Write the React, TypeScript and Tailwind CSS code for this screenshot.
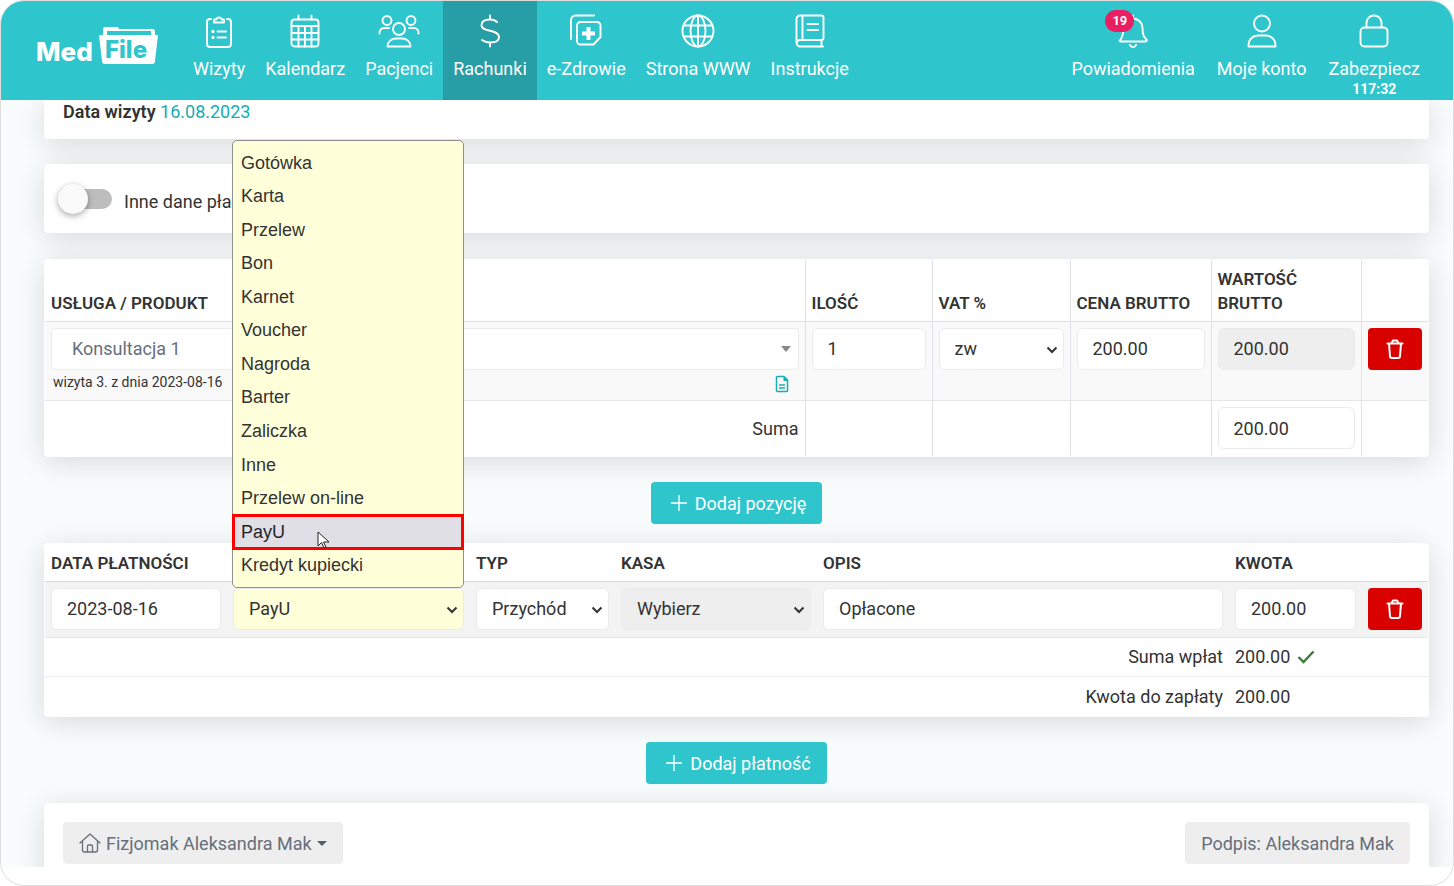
import React from 'react';
import { clsx } from 'clsx';

const paymentMethods = [
  'Gotówka',
  'Karta',
  'Przelew',
  'Bon',
  'Karnet',
  'Voucher',
  'Nagroda',
  'Barter',
  'Zaliczka',
  'Inne',
  'Przelew on-line',
  'PayU',
  'Kredyt kupiecki',
];

interface IconProps {
  children: React.ReactNode;
  className?: string;
}

const NavIcon: React.FC<IconProps> = ({ children, className }) => (
  <svg
    viewBox="0 0 34 34"
    className={clsx('h-[34px] shrink-0', className ?? 'w-[34px]')}
    fill="none"
    stroke="currentColor"
    strokeWidth="1.9"
    strokeLinecap="round"
    strokeLinejoin="round"
    aria-hidden="true"
  >
    {children}
  </svg>
);

const mainNav = [
  {
    label: 'Wizyty',
    icon: (
      <NavIcon>
        <path d="M9 5H8a3 3 0 0 0-3 3v22a3 3 0 0 0 3 3h18a3 3 0 0 0 3-3V8a3 3 0 0 0-3-3h-1" />
        <path d="M12 8.500h10V5.500h-2.300a2.800 2.800 0 0 0-5.400 0H12z" />
        <circle cx="11" cy="17.500" r="0.700" />
        <circle cx="11" cy="23.500" r="0.700" />
        <path d="M15.500 17.500H24M15.500 23.500H24" />
      </NavIcon>
    ),
  },
  {
    label: 'Kalendarz',
    icon: (
      <NavIcon>
        <rect x="3.500" y="5.500" width="27" height="27" rx="3" />
        <path d="M10.500 1.500v4M23.500 1.500v4M3.500 12h27M3.500 19h27M3.500 25.500h27M10.500 12v20.500M17 12v20.500M23.500 12v20.500" />
      </NavIcon>
    ),
  },
  {
    label: 'Pacjenci',
    icon: (
      <svg viewBox="0 0 42 34" className="h-[34px] w-[42px]" fill="none" stroke="currentColor" strokeWidth="1.9" strokeLinecap="round" strokeLinejoin="round" aria-hidden="true">
        <circle cx="21" cy="15" r="6" />
        <circle cx="9" cy="6.500" r="4.500" />
        <circle cx="33" cy="6.500" r="4.500" />
        <path d="M1.500 19.500v-1a4.500 4.500 0 0 1 4.500-4.500h5M40.500 19.500v-1a4.500 4.500 0 0 0-4.500-4.500h-5" />
        <path d="M9.500 32.500c0-5 4-8 8.500-8h6c4.500 0 8.500 3 8.500 8z" />
      </svg>
    ),
  },
  {
    label: 'Rachunki',
    active: true,
    icon: (
      <NavIcon>
        <path d="M17 1.500v4M17 28.500v4M24 8c-2-2-4.500-2.500-7-2.500-5 0-8.500 2-8.500 5.700 0 7.300 17.500 3.800 17.500 11.800 0 3.500-3.500 5.500-8.500 5.500-3.500 0-6.500-1-8.500-2.500" />
      </NavIcon>
    ),
  },
  {
    label: 'e-Zdrowie',
    icon: (
      <NavIcon>
        <path d="M2 25V6a4.500 4.500 0 0 1 4.500-4.500H25" />
        <path d="M11.500 8H28a3.500 3.500 0 0 1 3.500 3.500V23l-7 7.500h-13A3.500 3.500 0 0 1 8 27V11.500A3.500 3.500 0 0 1 11.500 8z" />
        <path d="M17.500 13h4v4.500H26v4h-4.500V26h-4v-4.500H13v-4h4.500z" fill="currentColor" stroke="none" />
      </NavIcon>
    ),
  },
  {
    label: 'Strona WWW',
    icon: (
      <NavIcon>
        <circle cx="17" cy="17" r="15.500" />
        <ellipse cx="17" cy="17" rx="7.500" ry="15.500" />
        <path d="M17 1.500v31M3 11.500h28M3 22.500h28" />
      </NavIcon>
    ),
  },
  {
    label: 'Instrukcje',
    icon: (
      <NavIcon>
        <path d="M3.500 29V5A3.500 3.500 0 0 1 7 1.500h21.500a2 2 0 0 1 2 2V24a2 2 0 0 1-2 2H7a3.200 3.200 0 0 0 0 6.500h23M9.500 1.500V26M28.500 26v6.500M14.500 10H25M14.500 16H25" />
      </NavIcon>
    ),
  },
];

interface NavItemProps {
  label: string;
  icon: React.ReactNode;
  active?: boolean;
  note?: string;
  badge?: string;
  className?: string;
}

const NavItem: React.FC<NavItemProps> = ({ label, icon, active, note, badge, className = 'px-[10px]' }) => (
  <a
    href="#"
    className={clsx(
      'relative flex h-[99px] flex-col items-center pt-[13px] whitespace-nowrap',
      className,
      active && 'bg-[#279ea5]',
    )}
  >
    {icon}
    <span className="mt-[8px] text-[18px] leading-[26px]">{label}</span>
    {note && <span className="text-[14px] leading-[14px] font-bold">{note}</span>}
    {badge && (
      <span className="absolute top-[9px] left-[45px] rounded-full bg-[#e91e63] px-[7px] text-[13px] leading-[22px] font-bold">
        {badge}
      </span>
    )}
  </a>
);

const Logo = () => (
  <a href="#" aria-label="MedFile" className="ml-[35px] block pt-[25px]">
    <svg viewBox="0 0 124 42" className="h-[42px] w-[124px]" aria-hidden="true">
      <text x="0" y="35" fill="#fff" fontFamily="Inter, sans-serif" fontWeight="800" fontSize="26">
        Med
      </text>
      <path
        d="M67 10V3a2 2 0 0 1 2-2h12a2 2 0 0 1 2 2h34a2 2 0 0 1 2 2v5zM71 5v4h44V5z"
        fill="#fff"
        fillRule="evenodd"
      />
      <path d="M63 9h59l-3 26a3 3 0 0 1-3 3H69a3 3 0 0 1-3-3z" fill="#fff" />
      <text x="69" y="32" fill="#2fc5cd" fontFamily="Inter, sans-serif" fontWeight="800" fontSize="24">
        File
      </text>
    </svg>
  </a>
);

const Card: React.FC<IconProps> = ({ children, className }) => (
  <section className={clsx('rounded-[4px] bg-white shadow-[0_5px_30px_rgba(0,0,0,0.14)]', className)}>{children}</section>
);

const fieldClass = 'h-[42px] w-full rounded-[6px] border border-[#e9ecef] px-[15px] text-[18px] text-[#333]';

const Field: React.FC<{ label: string; value: string; readOnly?: boolean }> = ({ label, value, readOnly }) => (
  <input
    type="text"
    aria-label={label}
    defaultValue={value}
    readOnly={readOnly}
    className={clsx(fieldClass, 'block', readOnly ? 'bg-[#eee]' : 'bg-white')}
  />
);

const SelectField: React.FC<{ label: string; value: string; options?: string[]; tone?: string; disabled?: boolean }> = ({
  label,
  value,
  options = [value],
  tone = 'bg-white',
  disabled,
}) => (
  <div className="relative">
    <select
      aria-label={label}
      defaultValue={value}
      disabled={disabled}
      className={clsx(fieldClass, tone, 'block appearance-none opacity-100')}
    >
      {options.map((option) => (
        <option key={option}>{option}</option>
      ))}
    </select>
    <svg viewBox="0 0 12 8" className="pointer-events-none absolute top-[18px] right-[6px] h-[8px] w-[12px]" aria-hidden="true">
      <path d="M1.500 1.500 6 6l4.500-4.500" fill="none" stroke="#333" strokeWidth="2" />
    </svg>
  </div>
);

const DeleteButton = () => (
  <button type="button" aria-label="Usuń" className="flex h-[42px] w-full items-center justify-center rounded-[4px] bg-[#d90000] text-white">
    <svg viewBox="0 0 18 20" className="h-[20px] w-[18px]" fill="none" stroke="currentColor" strokeWidth="2" strokeLinejoin="round" strokeLinecap="round" aria-hidden="true">
      <path d="M1.500 4.500h15M3 4.500l1 12.500a2 2 0 0 0 2 2h6a2 2 0 0 0 2-2l1-12.500M5.500 4l1.500-2.500h4L12.500 4" />
    </svg>
  </button>
);

const AddButton: React.FC<{ label: string }> = ({ label }) => (
  <button type="button" className="flex h-[42px] items-center gap-[8px] rounded-[4px] bg-[#2fc5cd] pr-[16px] pl-[20px] text-[18px] text-white">
    <svg viewBox="0 0 16 16" className="h-[16px] w-[16px]" stroke="currentColor" strokeWidth="1.300" aria-hidden="true">
      <path d="M8 0v16M0 8h16" />
    </svg>
    {label}
  </button>
);

const PaymentMethodList = () => (
  <ul
    role="listbox"
    aria-label="Metoda płatności"
    className="absolute right-0 bottom-full -left-px z-10 flex h-[448px] flex-col rounded-[5px] border border-[#8f8f8f] bg-[#ffffd9] pt-[6px] pb-[4px] font-['Liberation_Sans',Arial,sans-serif] text-[18px] text-[#333]"
  >
    {paymentMethods.map((method) => (
      <li
        key={method}
        role="option"
        aria-selected={method === 'PayU'}
        className={clsx(
          'relative flex flex-1 items-center px-[8px]',
          method === 'PayU' && 'bg-[#e0dfe6] text-[#1f1f29] outline-3 -outline-offset-2 outline-[#f00]',
        )}
      >
        {method}
        {method === 'PayU' && (
          <svg viewBox="0 0 14 18" className="absolute top-[16px] left-[84px] h-[18px] w-[14px]" aria-hidden="true">
            <path d="M1 1v14l3.500-3.500 2.500 5.500 2-1-2.500-5H12z" fill="#fff" stroke="#222" strokeWidth="1" />
          </svg>
        )}
      </li>
    ))}
  </ul>
);

const headClass = 'px-[6px] pb-[6px] text-left align-bottom text-[17px] leading-[24px] font-semibold';

const ServicesTable = () => (
  <table className="w-full table-fixed border-collapse text-[18px]">
    <colgroup>
      <col />
      <col className="w-[127px]" />
      <col className="w-[138px]" />
      <col className="w-[141px]" />
      <col className="w-[150px]" />
      <col className="w-[67px]" />
    </colgroup>
    <thead>
      <tr className="h-[61px] divide-x divide-[#dee2e6] border-b border-[#dee2e6]">
        <th className={headClass}>USŁUGA / PRODUKT</th>
        <th className={headClass}>ILOŚĆ</th>
        <th className={headClass}>VAT %</th>
        <th className={headClass}>CENA BRUTTO</th>
        <th className={headClass}>WARTOŚĆ BRUTTO</th>
        <th className={headClass} />
      </tr>
    </thead>
    <tbody>
      <tr className="h-[79px] divide-x divide-[#dee2e6] border-b border-[#e3e5e7] bg-[#f9f9f9] align-top">
        <td className="px-[6px] pt-[6px]">
          <button type="button" className="flex h-[42px] w-full items-center justify-between rounded-[4px] border border-[#e9ecef] bg-white pr-[7px] pl-[20px] text-[18px] text-[#666f7b]">
            Konsultacja 1
            <span className="border-x-5 border-t-6 border-x-transparent border-t-[#888]" />
          </button>
          <div className="flex items-center justify-between pr-[10px] pl-[2px]">
            <span className="text-[14px] leading-[24px]">wizyta 3. z dnia 2023-08-16</span>
            <svg viewBox="0 0 14 18" className="mt-[5px] h-[18px] w-[14px] text-[#17adb5]" fill="none" stroke="currentColor" strokeWidth="1.500" aria-hidden="true">
              <path d="M2.500 1.500H9L12.500 5v10.500a1 1 0 0 1-1 1h-9a1 1 0 0 1-1-1v-13a1 1 0 0 1 1-1zM4 10h6M4 13h6" />
              <path d="M8.500 1v5H13z" fill="currentColor" stroke="none" />
            </svg>
          </div>
        </td>
        <td className="px-[6px] pt-[6px]"><Field label="Ilość" value="1" /></td>
        <td className="px-[6px] pt-[6px]"><SelectField label="VAT %" value="zw" /></td>
        <td className="px-[6px] pt-[6px]"><Field label="Cena brutto" value="200.00" /></td>
        <td className="px-[6px] pt-[6px]"><Field label="Wartość brutto" value="200.00" readOnly /></td>
        <td className="px-[6px] pt-[6px]"><DeleteButton /></td>
      </tr>
      <tr className="h-[56px] divide-x divide-[#dee2e6]">
        <td className="px-[6px] text-right">Suma</td>
        <td />
        <td />
        <td />
        <td className="px-[6px]"><Field label="Suma brutto" value="200.00" /></td>
        <td />
      </tr>
    </tbody>
  </table>
);

const PaymentsTable = () => (
  <table className="w-full table-fixed border-collapse text-[18px]">
    <colgroup>
      <col className="w-[182px]" />
      <col className="w-[243px]" />
      <col className="w-[145px]" />
      <col className="w-[202px]" />
      <col />
      <col className="w-[133px]" />
      <col className="w-[66px]" />
    </colgroup>
    <thead>
      <tr className="h-[37px] border-b border-[#d9dcdf]">
        <th className={headClass}>DATA PŁATNOŚCI</th>
        <th />
        <th className={headClass}>TYP</th>
        <th className={headClass}>KASA</th>
        <th className={headClass}>OPIS</th>
        <th className={headClass}>KWOTA</th>
        <th />
      </tr>
    </thead>
    <tbody>
      <tr className="h-[56px] border-b border-[#e3e5e7] bg-[#f3f3f3] align-top">
        <td className="px-[6px] pt-[6px]"><Field label="Data płatności" value="2023-08-16" /></td>
        <td className="px-[6px] pt-[6px]">
          <div className="relative">
            <SelectField label="Metoda" value="PayU" options={paymentMethods} tone="bg-[#ffffd9]" />
            <PaymentMethodList />
          </div>
        </td>
        <td className="px-[6px] pt-[6px]"><SelectField label="Typ" value="Przychód" /></td>
        <td className="px-[6px] pt-[6px]"><SelectField label="Kasa" value="Wybierz" tone="bg-[#eee]" disabled /></td>
        <td className="px-[6px] pt-[6px]"><Field label="Opis" value="Opłacone" /></td>
        <td className="px-[6px] pt-[6px]"><Field label="Kwota" value="200.00" /></td>
        <td className="px-[6px] pt-[6px]"><DeleteButton /></td>
      </tr>
      <tr className="h-[39px] border-b border-[#e9ebec]">
        <td colSpan={5} className="px-[6px] text-right">Suma wpłat</td>
        <td colSpan={2} className="px-[6px]">
          <span className="flex items-center gap-[7px]">
            200.00
            <svg viewBox="0 0 18 14" className="h-[14px] w-[18px]" aria-hidden="true">
              <path d="m1.500 7 5 5L16.500 1.500" fill="none" stroke="#3a7d3c" strokeWidth="2.400" />
            </svg>
          </span>
        </td>
      </tr>
      <tr className="h-[40px]">
        <td colSpan={5} className="px-[6px] text-right">Kwota do zapłaty</td>
        <td colSpan={2} className="px-[6px]">200.00</td>
      </tr>
    </tbody>
  </table>
);

export default function App() {
  return (
    <div className="overflow-hidden rounded-[24px] border border-[#ddd] bg-white pb-[18px] font-[Roboto,sans-serif] text-[18px] text-[#333]">
      <header className="relative z-20 flex h-[99px] bg-[#2fc5cd] pr-[22px] text-white">
        <Logo />
        <nav className="ml-[23px] flex">
          {mainNav.map((item) => (
            <NavItem key={item.label} {...item} />
          ))}
        </nav>
        <nav className="ml-auto flex">
          <NavItem
            label="Powiadomienia"
            badge="19"
            className="px-[11px]"
            icon={
              <NavIcon>
                <path d="M17 1.500v2M3.500 27c3-3.500 4-7 4-13a9.500 9.500 0 0 1 19 0c0 6 1 9.500 4 11.500.5 1 0 2-1 2h-25M14 31a3.200 3.200 0 0 0 6 0" />
              </NavIcon>
            }
          />
          <NavItem
            label="Moje konto"
            className="px-[11px]"
            icon={
              <NavIcon>
                <circle cx="17" cy="9.500" r="8" />
                <path d="M3.500 32.500v-1.500a9.500 9.500 0 0 1 9.500-9.500h8a9.500 9.500 0 0 1 9.500 9.500v1.500z" />
              </NavIcon>
            }
          />
          <NavItem
            label="Zabezpiecz"
            note="117:32"
            className="px-[11px]"
            icon={
              <NavIcon>
                <rect x="3.500" y="13.500" width="27" height="19" rx="4" />
                <path d="M9.500 13.500V9a7.500 7.500 0 0 1 15 0v4.500" />
              </NavIcon>
            }
          />
        </nav>
      </header>

      <main className="flex h-[767px] flex-col overflow-hidden bg-[#f8fcfd] pr-[24px] pl-[43px]">
        <Card className="h-[39px] shrink-0 rounded-t-none px-[19px] leading-[24px]">
          <span className="font-semibold">Data wizyty</span> <span className="text-[#17adb5]">16.08.2023</span>
        </Card>

        <Card className="mt-[25px] flex h-[69px] shrink-0 items-center px-[14px]">
          <label className="flex items-center gap-[12px]">
            <input type="checkbox" className="peer sr-only" />
            <span className="flex h-[20px] w-[54px] items-center">
              <span className="relative z-10 h-[30px] w-[30px] shrink-0 rounded-full bg-[#fafafa] shadow-[0_2px_6px_rgba(0,0,0,0.35)]" />
              <span className="-ml-[20px] h-[20px] flex-1 rounded-full bg-[#bdbdbd]" />
            </span>
            <span className="pt-[5px]">Inne dane pła</span>
          </label>
        </Card>

        <Card className="mt-[26px] shrink-0 p-px">
          <ServicesTable />
        </Card>

        <div className="mt-[25px] flex shrink-0 justify-center">
          <AddButton label="Dodaj pozycję" />
        </div>

        <Card className="mt-[19px] shrink-0 p-px">
          <PaymentsTable />
        </Card>

        <div className="mt-[25px] flex shrink-0 justify-center">
          <AddButton label="Dodaj płatność" />
        </div>

        <Card className="mt-[19px] flex shrink-0 justify-between px-[19px] pt-[19px] pb-[20px] text-[#666f7b]">
          <button type="button" className="flex h-[42px] items-center rounded-[4px] bg-[#eee] px-[16px]">
            <svg viewBox="0 0 22 20" className="mr-[5px] h-[20px] w-[22px]" fill="none" stroke="currentColor" strokeWidth="1.300" strokeLinejoin="round" strokeLinecap="round" aria-hidden="true">
              <path d="m1 10 10-9 10 9M3.500 8v9a2 2 0 0 0 2 2h11a2 2 0 0 0 2-2V8M8.500 19v-6a1 1 0 0 1 1-1h3a1 1 0 0 1 1 1v6" />
            </svg>
            Fizjomak Aleksandra Mak
            <span className="ml-[5px] border-x-5 border-t-5 border-x-transparent border-t-[#555f6b]" />
          </button>
          <button type="button" className="h-[42px] rounded-[4px] bg-[#eee] px-[16px]">
            Podpis: Aleksandra Mak
          </button>
        </Card>
      </main>
    </div>
  );
}
